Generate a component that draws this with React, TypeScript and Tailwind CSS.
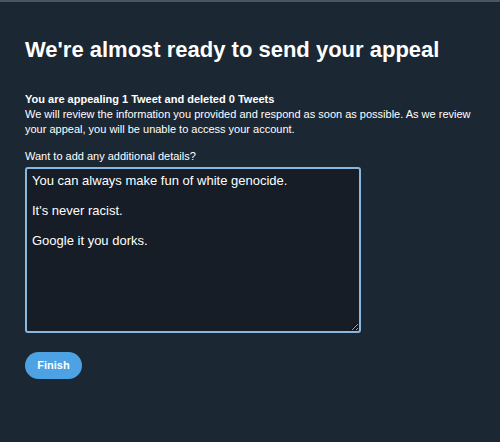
import { useState } from 'react'

export default function App() {
  const [details, setDetails] = useState(
    "You can always make fun of white genocide.\n\nIt's never racist.\n\nGoogle it you dorks."
  )

  return (
    <div
      className="w-[500px] h-[442px] bg-[#1c2734] border-t-2 border-[#4b5566] overflow-hidden text-white"
      style={{ fontFamily: '"Liberation Sans", Arial, sans-serif' }}
    >
      <div className="pl-[25px] pt-[33px]">
        <h1 className="text-[22px] leading-[30px] font-bold">
          We're almost ready to send your appeal
        </h1>

        <div className="mt-[27px] text-[11px] leading-[15px]">
          <p className="font-bold">You are appealing 1 Tweet and deleted 0 Tweets</p>
          <p className="pr-[20px]">
            We will review the information you provided and respond as soon as possible. As we review
            your appeal, you will be unable to access your account.
          </p>
        </div>

        {/* Details */}
        <label htmlFor="details" className="block mt-[12px] text-[11px] leading-[15px]">
          Want to add any additional details?
        </label>
        <textarea
          id="details"
          value={details}
          onChange={(e) => setDetails(e.target.value)}
          className="block mt-[3px] w-[336px] h-[166px] bg-[#161d26] border-2 border-[#88b7df] rounded-[3px] px-[5px] py-[4px] text-[13px] leading-[15px] text-white outline-none resize"
        />

        <button
          type="button"
          className="mt-[19px] w-[57px] h-[27px] rounded-full bg-[#4da2e3] text-white text-[11px] font-bold"
        >
          Finish
        </button>
      </div>
    </div>
  )
}
